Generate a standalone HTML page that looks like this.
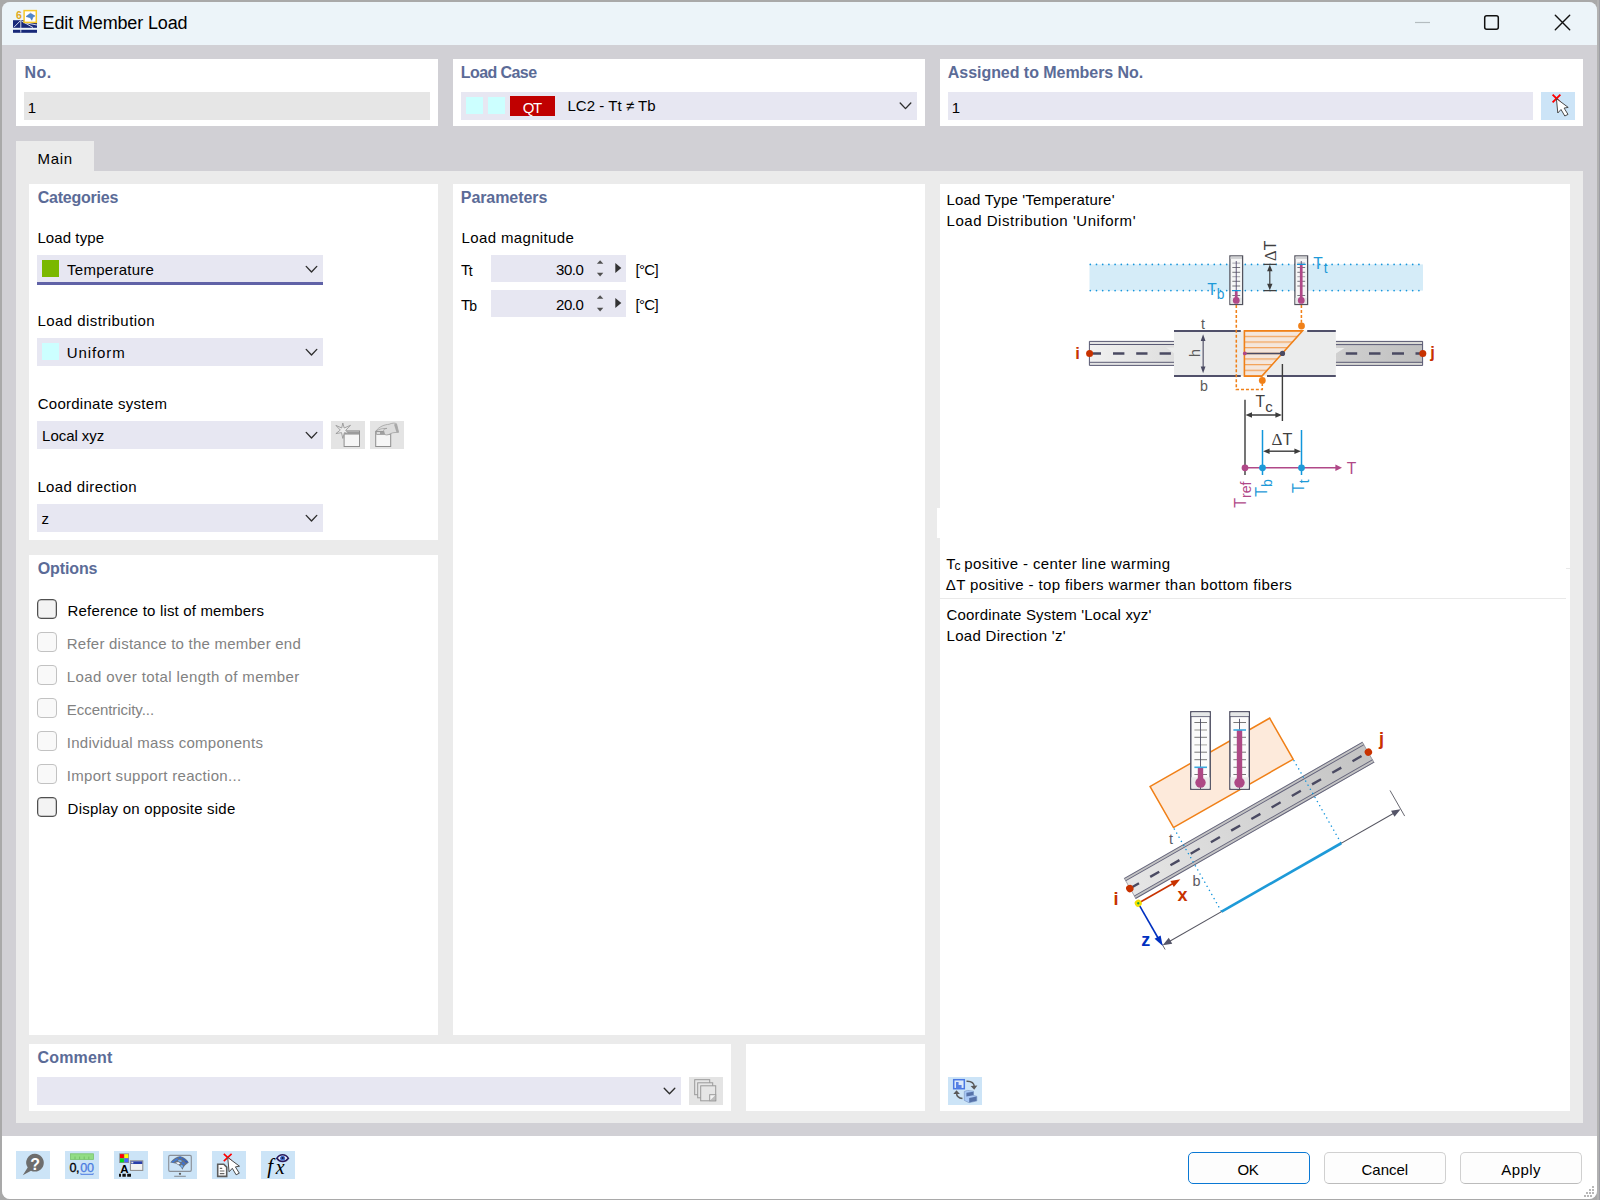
<!DOCTYPE html>
<html lang="en">
<head>
<meta charset="utf-8">
<title>Edit Member Load</title>
<style>
*{box-sizing:border-box;margin:0;padding:0}
html,body{width:1600px;height:1200px;overflow:hidden}
body{background:#a9a9a9;font-family:"Liberation Sans",sans-serif;font-size:15px;color:#000;position:relative}
.abs,.t,.w,.in,.ind,.btn,.gbtn,.cb,.cbd,.pb{position:absolute}
#win{left:2px;top:2px;width:1595px;height:1197px;background:#d1d0d5;border-radius:8px 8px 8px 8px;overflow:hidden}
#rstrip{left:1597px;top:0;width:3px;height:1200px;background:linear-gradient(90deg,#b2b2b2 0,#b2b2b2 60%,#9d9da3 60%)}
#title{left:0;top:0;width:1595px;height:43px;background:#ecf4f9}
#foot{left:0;top:1134px;width:1595px;height:63px;background:#fff}
#tabpanel{left:16px;top:171px;width:1567px;height:952px;background:#ebebeb}
#tab{left:16px;top:141px;width:78px;height:31px;background:#ebebeb}
.w{background:#fff}
.in{background:#e7e7f2}
.ind{background:#e6e6e6}
.btn{background:#cce4f7}
.gbtn{background:#e4e4e4}
.t{white-space:pre;line-height:1;}
.s{position:relative}
.cb{width:20px;height:20px;border:1px solid #505050;border-radius:4px;background:#f3f3f3;box-shadow:inset 0 0 0 .5px #9a9a9a}
.cbd{width:20px;height:20px;border:1px solid #c2c2c2;border-radius:4px;background:#f9f9f9}
.pb{height:32px;border:1px solid #d0d0d0;border-bottom-color:#bcbcbc;border-radius:5px;background:#fdfdfd}
svg{position:absolute;overflow:visible}
</style>
</head>
<body>
<div id="rstrip" class="abs"></div>
<div id="win" class="abs"><div id="title" class="abs"></div><div id="foot" class="abs"></div></div>

<!-- top row panels -->
<div class="w" style="left:16px;top:59px;width:422px;height:67px"></div>
<div class="ind" style="left:24px;top:92px;width:406px;height:28px"></div>
<div class="w" style="left:453px;top:59px;width:472px;height:67px"></div>
<div class="in" style="left:461px;top:92px;width:456px;height:28px"></div>
<div class="abs" style="left:466px;top:97px;width:17px;height:17px;background:#ccffff"></div>
<div class="abs" style="left:488px;top:97px;width:17px;height:17px;background:#ccffff"></div>
<div class="abs" style="left:510px;top:96px;width:45px;height:20px;background:#c00000"></div>
<div class="w" style="left:940px;top:59px;width:643px;height:67px"></div>
<div class="in" style="left:948px;top:92px;width:585px;height:28px"></div>
<div class="btn" style="left:1541px;top:92px;width:34px;height:28px"></div>

<!-- tab -->
<div id="tab" class="abs"></div>
<div id="tabpanel" class="abs"></div>

<!-- Categories -->
<div class="w" style="left:29px;top:184px;width:409px;height:356px"></div>
<div class="in" style="left:37px;top:255px;width:286px;height:28px"></div>
<div class="abs" style="left:37px;top:282px;width:286px;height:3px;background:#6062a7"></div>
<div class="abs" style="left:42px;top:260px;width:17px;height:17px;background:#7ab800"></div>
<div class="in" style="left:37px;top:338px;width:286px;height:28px"></div>
<div class="abs" style="left:42px;top:343px;width:17px;height:17px;background:#ccffff"></div>
<div class="in" style="left:37px;top:421px;width:286px;height:28px"></div>
<div class="gbtn" style="left:331px;top:421px;width:34px;height:28px"></div>
<div class="gbtn" style="left:370px;top:421px;width:34px;height:28px"></div>
<div class="in" style="left:37px;top:504px;width:286px;height:28px"></div>

<!-- Options -->
<div class="w" style="left:29px;top:555px;width:409px;height:480px"></div>
<div class="cb" style="left:37px;top:599px"></div>
<div class="cbd" style="left:37px;top:632px"></div>
<div class="cbd" style="left:37px;top:665px"></div>
<div class="cbd" style="left:37px;top:698px"></div>
<div class="cbd" style="left:37px;top:731px"></div>
<div class="cbd" style="left:37px;top:764px"></div>
<div class="cb" style="left:37px;top:797px"></div>

<!-- Parameters -->
<div class="w" style="left:453px;top:184px;width:472px;height:851px"></div>
<div class="in" style="left:491px;top:255px;width:135px;height:27px"></div>
<div class="in" style="left:491px;top:290px;width:135px;height:27px"></div>

<!-- Comment -->
<div class="w" style="left:29px;top:1044px;width:702px;height:67px"></div>
<div class="in" style="left:37px;top:1077px;width:644px;height:28px"></div>
<div class="gbtn" style="left:689px;top:1077px;width:34px;height:28px"></div>
<div class="w" style="left:746px;top:1044px;width:179px;height:67px"></div>

<!-- Right panel -->
<div class="w" style="left:940px;top:184px;width:630px;height:927px"></div>
<div class="abs" style="left:940px;top:598px;width:626px;height:1px;background:#e9e9e9"></div>
<div class="abs" style="left:1566px;top:568px;width:4px;height:1px;background:#e9e9e9"></div>
<div class="w" style="left:937px;top:508px;width:3px;height:30px"></div>
<div class="btn" style="left:948px;top:1077px;width:34px;height:28px"></div>

<!-- footer buttons -->
<div class="btn" style="left:16px;top:1151px;width:34px;height:28px"></div>
<div class="btn" style="left:65px;top:1151px;width:34px;height:28px"></div>
<div class="btn" style="left:114px;top:1151px;width:34px;height:28px"></div>
<div class="btn" style="left:163px;top:1151px;width:34px;height:28px"></div>
<div class="btn" style="left:212px;top:1151px;width:34px;height:28px"></div>
<div class="btn" style="left:261px;top:1151px;width:34px;height:28px"></div>
<div class="pb" style="left:1188px;top:1152px;width:122px;border:1.5px solid #0a78d4"></div>
<div class="pb" style="left:1324px;top:1152px;width:122px"></div>
<div class="pb" style="left:1460px;top:1152px;width:122px"></div>

<span class="t" style="left:42.60px;top:14px;font-size:18px;letter-spacing:-0.139px;">Edit Member Load</span>
<span class="t" style="left:24.40px;top:65px;font-size:16px;font-weight:700;color:#5b6b97;letter-spacing:0.559px;">No.</span>
<span class="t" style="left:27.80px;top:100px;">1</span>
<span class="t" style="left:460.80px;top:65px;font-size:16px;font-weight:700;color:#5b6b97;letter-spacing:-0.578px;">Load Case</span>
<span class="t" style="left:522.70px;top:100px;color:#fff;letter-spacing:-1.244px;">QT</span>
<span class="t" style="left:567.40px;top:98px;letter-spacing:0.048px;">LC2 - Tt ≠ Tb</span>
<span class="t" style="left:947.80px;top:65px;font-size:16px;font-weight:700;color:#5b6b97;letter-spacing:-0.045px;">Assigned to Members No.</span>
<span class="t" style="left:951.80px;top:100px;">1</span>
<span class="t" style="left:37.60px;top:151px;letter-spacing:0.661px;">Main</span>
<span class="t" style="left:37.70px;top:190px;font-size:16px;font-weight:700;color:#5b6b97;letter-spacing:-0.234px;">Categories</span>
<span class="t" style="left:37.40px;top:230px;letter-spacing:0.089px;">Load type</span>
<span class="t" style="left:67.10px;top:262px;letter-spacing:0.258px;">Temperature</span>
<span class="t" style="left:37.40px;top:313px;letter-spacing:0.451px;">Load distribution</span>
<span class="t" style="left:66.70px;top:345px;letter-spacing:0.914px;">Uniform</span>
<span class="t" style="left:37.70px;top:396px;letter-spacing:0.259px;">Coordinate system</span>
<span class="t" style="left:42.10px;top:428px;letter-spacing:-0.041px;">Local xyz</span>
<span class="t" style="left:37.40px;top:479px;letter-spacing:0.382px;">Load direction</span>
<span class="t" style="left:41.60px;top:511px;">z</span>
<span class="t" style="left:37.80px;top:561px;font-size:16px;font-weight:700;color:#5b6b97;letter-spacing:-0.123px;">Options</span>
<span class="t" style="left:67.60px;top:603px;letter-spacing:0.172px;">Reference to list of members</span>
<span class="t" style="left:66.80px;top:636px;color:#828282;letter-spacing:0.232px;">Refer distance to the member end</span>
<span class="t" style="left:66.80px;top:669px;color:#828282;letter-spacing:0.399px;">Load over total length of member</span>
<span class="t" style="left:66.80px;top:702px;color:#828282;letter-spacing:-0.056px;">Eccentricity...</span>
<span class="t" style="left:66.80px;top:735px;color:#828282;letter-spacing:0.273px;">Individual mass components</span>
<span class="t" style="left:66.80px;top:768px;color:#828282;letter-spacing:0.302px;">Import support reaction...</span>
<span class="t" style="left:67.60px;top:801px;letter-spacing:0.221px;">Display on opposite side</span>
<span class="t" style="left:460.80px;top:190px;font-size:16px;font-weight:700;color:#5b6b97;letter-spacing:-0.075px;">Parameters</span>
<span class="t" style="left:461.60px;top:230px;letter-spacing:0.354px;">Load magnitude</span>
<span class="t" style="left:460.9px;top:262px">T<span class="s" style="font-size:14px;top:1px;margin-left:-1.3px">t</span></span>
<span class="t" style="left:556.00px;top:262px;letter-spacing:-0.434px;">30.0</span>
<span class="t" style="left:635.60px;top:262px;letter-spacing:-0.724px;">[°C]</span>
<span class="t" style="left:460.9px;top:297px">T<span class="s" style="font-size:14px;top:1px;margin-left:-0.9px">b</span></span>
<span class="t" style="left:556.00px;top:297px;letter-spacing:-0.434px;">20.0</span>
<span class="t" style="left:635.60px;top:297px;letter-spacing:-0.724px;">[°C]</span>
<span class="t" style="left:37.60px;top:1050px;font-size:16px;font-weight:700;color:#5b6b97;letter-spacing:0.153px;">Comment</span>
<span class="t" style="left:1237.50px;top:1162px;letter-spacing:-0.488px;">OK</span>
<span class="t" style="left:1361.50px;top:1162px;">Cancel</span>
<span class="t" style="left:1501.30px;top:1162px;letter-spacing:0.417px;">Apply</span>
<span class="t" style="left:946.50px;top:192px;letter-spacing:0.187px;">Load Type &#x27;Temperature&#x27;</span>
<span class="t" style="left:946.50px;top:213px;letter-spacing:0.540px;">Load Distribution &#x27;Uniform&#x27;</span>
<span class="t" style="left:946.3px;top:556px">T<span class="s" style="font-size:12px;top:1px;margin-left:-0.9px">c</span><span style="letter-spacing:0.4px;margin-left:-0.8px"> positive - center line warming</span></span>
<span class="t" style="left:945.80px;top:577px;letter-spacing:0.380px;">ΔT positive - top fibers warmer than bottom fibers</span>
<span class="t" style="left:946.50px;top:607px;letter-spacing:0.172px;">Coordinate System &#x27;Local xyz&#x27;</span>
<span class="t" style="left:946.50px;top:628px;letter-spacing:0.293px;">Load Direction &#x27;z&#x27;</span>
<svg width="1600" height="1200" viewBox="0 0 1600 1200" style="left:0;top:0" font-family="'Liberation Sans',sans-serif">
<defs>
<path id="chev" d="M-5.3 -3L0 2.6L5.3 -3" fill="none" stroke="#2e2e2e" stroke-width="1.35" stroke-linecap="round" stroke-linejoin="round"/>
<g id="spin"><path d="M0 0l3.2 3.6h-6.4z" fill="#505050"/><path d="M0 16.2l3.2-3.6h-6.4z" fill="#505050"/><path d="M15.2 2.7l6 5.1l-6 5.1z" fill="#333"/></g>
<path id="cur" d="M0 0L1.4 14.4L4.6 10.9L8.4 17.4L11.6 15.8L7.7 9.5L11.8 8.8Z" fill="#fff" stroke="#4a4a4a" stroke-width="1" stroke-linejoin="round"/>
</defs>
<!-- chevrons -->
<use href="#chev" x="905.5" y="106"/>
<use href="#chev" x="311.5" y="269.4"/>
<use href="#chev" x="311.5" y="352.4"/>
<use href="#chev" x="311.5" y="435.4"/>
<use href="#chev" x="311.5" y="518.4"/>
<use href="#chev" x="669.5" y="1091.2"/>
<!-- spinners -->
<use href="#spin" x="600.1" y="260.2"/>
<use href="#spin" x="600.1" y="295.2"/>
<!-- window controls -->
<line x1="1415" x2="1430" y1="22.5" y2="22.5" stroke="#b4bcc0" stroke-width="1.2"/>
<rect x="1484.7" y="15.7" width="13.6" height="13.6" rx="2" fill="none" stroke="#111" stroke-width="1.5"/>
<path d="M1555.3 15.3L1569.7 29.7M1569.7 15.3L1555.3 29.7" stroke="#111" stroke-width="1.4" stroke-linecap="round"/>
<!-- resize grip -->
<g fill="#b8b8b8"><rect x="1592" y="1186" width="2" height="2"/><rect x="1589" y="1189" width="2" height="2"/><rect x="1592" y="1189" width="2" height="2"/><rect x="1586" y="1192" width="2" height="2"/><rect x="1589" y="1192" width="2" height="2"/><rect x="1592" y="1192" width="2" height="2"/><rect x="1584" y="1195" width="2" height="2"/><rect x="1587" y="1195" width="2" height="2"/><rect x="1590" y="1195" width="2" height="2"/></g>

<!-- app icon -->
<g>
<rect x="13" y="20.2" width="24" height="7.6" fill="#172878"/><rect x="13" y="29.8" width="24" height="3" fill="#172878"/>
<path d="M20.8 20.5V32.6M20.5 20.6L14 27.2M21.5 21L33 27.5M24 22.5L37 25" stroke="#e8ecf8" stroke-width=".9" fill="none"/>
<rect x="24.1" y="10.6" width="12.2" height="11.8" fill="#fff" stroke="#f6c828" stroke-width="1.5"/>
<path d="M26 16.5L30.5 13.2L35 16L33 17L31.8 20.3L30.3 17.8Z" fill="#4c86cc" stroke="#3c6ab0" stroke-width=".5"/>
<text x="15.9" y="18.7" font-size="10.5" font-weight="700" fill="#e0a820">6</text>
</g>

<!-- assigned pick button -->
<path d="M1552.6 94.6L1560.4 102.4M1560.4 94.6L1552.6 102.4" stroke="#ff0000" stroke-width="1.9"/>
<use href="#cur" x="1556.4" y="98.6"/>

<!-- coord system buttons (disabled look) -->
<g>
<rect x="344.1" y="430.9" width="15.4" height="15.6" fill="#f6f6f6" stroke="#8e8e8e" stroke-width="1"/>
<rect x="344.6" y="431.4" width="14.4" height="3.2" fill="#9c9c9c"/>
<path d="M342.8 423.0L344.2 428.0L350.5 425.3L345.7 430.3L348.6 433.4L344.4 432.7L342.8 438.4L341.5 432.6L335.9 433.6L340.3 430.1L335.9 425.4L341.7 428.0Z" fill="#ececec" stroke="#909090" stroke-width=".8" stroke-linejoin="round"/>
</g>
<g>
<rect x="375.7" y="431.4" width="15" height="15.1" fill="#f6f6f6" stroke="#8e8e8e" stroke-width="1"/>
<rect x="376.2" y="431.9" width="14" height="3" fill="#a0a0a0"/><rect x="377" y="432.3" width="3" height="1.4" fill="#f4f4f4"/>
<path d="M376 431C379 426.5 385 424.5 389 424.3C392 423 395 422.6 396.5 423.8L398.6 432.3L394 432.6C391 433 390.6 434 388.5 434.6C386.5 435.5 384.4 434.8 384.3 433.2L383.6 430.6C383.4 428.8 386 428.6 387 428.4C383 428.4 379 429 376 431Z" fill="#dcdcdc" stroke="#9a9a9a" stroke-width=".7"/>
<path d="M394 424.5L396.5 432.4L398.6 432.2L396.5 423.8Z" fill="#a8a8a8"/>
</g>

<!-- comment library button -->
<g fill="#e6e6e6" stroke="#9a9a9a" stroke-width="1">
<rect x="694.7" y="1079.7" width="15" height="15"/><rect x="697.7" y="1082.8" width="15" height="15"/><rect x="700.7" y="1085.8" width="15" height="15"/>
<rect x="709.7" y="1094.7" width="6" height="6" fill="#f4f4f4"/>
</g>
<path d="M715.2 1095.2V1100.2H710.2Z" fill="#bdbdbd"/>

<!-- view switch button -->
<g>
<rect x="953.7" y="1079.7" width="10.6" height="9" fill="#dbe9fa" stroke="#4a78e2" stroke-width="1.5"/>
<path d="M956 1088.5V1082H958.6V1085H961.6V1088.5Z" fill="#5580e4"/>
<path d="M966.5 1081.2C971 1081 974 1083 974.3 1086.5" fill="none" stroke="#5a5a5a" stroke-width="1.5"/>
<path d="M970.6 1086l3.6 3.7l3.2-4.2z" fill="#5a5a5a"/>
<path d="M962.5 1098.6C958.5 1098 956.6 1096 956.6 1093.2" fill="none" stroke="#5a5a5a" stroke-width="1.5"/>
<path d="M953.3 1094l3.2-3.7l3.4 3.7z" fill="#5a5a5a"/>
<path d="M964.3 1091.4L967.5 1090.4L973.5 1091.2L973.5 1095.5L976.8 1096.3V1101L969 1102.7L964.3 1100.4Z" fill="#a9c9f6" stroke="#6b86b4" stroke-width=".5"/>
<path d="M966.4 1092.8L973.4 1091.7V1095.3L966.4 1096.6Z" fill="#5672a8"/>
<path d="M969.2 1098L976.6 1096.6V1100.8L969.2 1102.4Z" fill="#5672a8"/>
</g>

<!-- footer icon 1: help -->
<g>
<path d="M34.9 1153.8a8.9 8.9 0 1 1 -3.9 16.9L22.8 1175.2L27.7 1167.6A8.9 8.9 0 0 1 34.9 1153.8Z" fill="#6d6d6d"/>
<text x="30.3" y="1169.8" font-size="16" font-weight="700" fill="#fff">?</text>
</g>
<!-- footer icon 2: decimals -->
<g>
<rect x="70.4" y="1153.8" width="23" height="5.6" fill="#92dd85" stroke="#78c46c" stroke-width=".8"/>
<path d="M75 1159.2v-2.6M79.6 1159.2v-2.6M84.2 1159.2v-2.6M88.8 1159.2v-2.6" stroke="#6cba60" stroke-width=".8"/>
<text x="69.4" y="1171.8" font-size="12.6" fill="#000" stroke="#000" stroke-width=".3" letter-spacing="-.4">0,<tspan x="80.3" fill="#4a7ae0" stroke="#4a7ae0" stroke-width=".25" letter-spacing="-.3">00</tspan></text>
<path d="M80.8 1173.3v1h12.4v-1" fill="none" stroke="#4a7ae0" stroke-width="1"/>
</g>
<!-- footer icon 3: colours / A / window -->
<g>
<rect x="119.2" y="1153.4" width="9.8" height="9.6" fill="#8a8a8a"/>
<rect x="120" y="1154.2" width="3.9" height="3.8" fill="#f00"/><rect x="124.4" y="1154.2" width="3.9" height="3.8" fill="#ff0"/>
<rect x="120" y="1158.5" width="3.9" height="3.8" fill="#0d2"/><rect x="124.4" y="1158.5" width="3.9" height="3.8" fill="#46f"/>
<rect x="130.4" y="1160.8" width="12.4" height="9.6" fill="#f2f2f2" stroke="#8a8a8a" stroke-width="1"/>
<rect x="130.9" y="1161.3" width="11.4" height="2.7" fill="#2a3ea8"/><rect x="131.3" y="1161.8" width="2" height="1.6" fill="#ddd"/>
<text x="120.2" y="1172.8" font-size="11.5" font-weight="700" fill="#000">A</text>
<path d="M119 1175.2h2M122.4 1175.2h3.4M127.2 1175.2h3.8" stroke="#111" stroke-width="3"/>
</g>
<!-- footer icon 4: monitor -->
<g>
<rect x="168.7" y="1155.4" width="22.6" height="16" rx="1.3" fill="none" stroke="#8a9098" stroke-width="1.15"/>
<circle cx="180" cy="1173.8" r="1.15" fill="#5a5a5a"/>
<line x1="174.2" x2="185.8" y1="1176.3" y2="1176.3" stroke="#8a9098" stroke-width="1.1"/>
<path d="M170.2 1162.4C173 1158.5 177 1156.6 180.1 1156.2C184 1156.8 187 1159.4 188.8 1162.4C186 1164 183.6 1166.6 182.4 1169.8C181 1166.6 178.4 1164.6 175.6 1163.6C173.8 1163 172 1162.6 170.2 1162.4Z" fill="#687280"/>
<g>
<ellipse cx="180.1" cy="1157.7" rx="1.7" ry=".9" fill="#2e6ad6"/>
<ellipse cx="176.2" cy="1159.6" rx="1.9" ry=".9" fill="#3c7ce2" transform="rotate(-18 176.2 1159.600)"/>
<ellipse cx="183.7" cy="1159.5" rx="1.8" ry=".9" fill="#2c62ca" transform="rotate(22 183.7 1159.500)"/>
<ellipse cx="173.4" cy="1161.5" rx="1.7" ry=".8" fill="#3c7ce2" transform="rotate(-25 173.4 1161.500)"/>
<ellipse cx="179.9" cy="1160.9" rx="1.9" ry="1" fill="#74b2f4" transform="rotate(15 179.9 1160.900)"/>
<ellipse cx="186.2" cy="1161.6" rx="1.6" ry=".9" fill="#2a5ac2" transform="rotate(32 186.2 1161.600)"/>
<ellipse cx="183.300" cy="1163.400" rx="1.7" ry="1.100" fill="#3a72da" transform="rotate(35 183.300 1163.400)"/>
<ellipse cx="181.700" cy="1166.300" rx="1.5" ry="1.200" fill="#72b0f2" transform="rotate(50 181.700 1166.300)"/>
<path d="M175.600 1162.700L178.200 1162L180.400 1163.600L178.600 1164.600Z" fill="#f4f6fa"/>
</g>
</g>
<!-- footer icon 5: doc + cursor -->
<g>
<path d="M217.7 1164.3H223.800L226.700 1167.200V1176.400H217.700Z" fill="#fff" stroke="#5c5c5c" stroke-width="1.6"/>
<path d="M219.800 1168.400h2.400M219.800 1171h4.600M219.800 1173.600h4.600" stroke="#666" stroke-width="1.1"/>
<path d="M223.800 1153.800L231.600 1161.200M231.600 1153.800L223.800 1161.200" stroke="#ff0000" stroke-width="1.6"/>
<use href="#cur" x="227.700" y="1157.400"/>
</g>
<!-- footer icon 6: fx eye -->
<g>
<text x="267.2" y="1172.6" font-family="'Liberation Serif',serif" font-style="italic" font-size="21" fill="#000">f<tspan x="275.8" y="1173.8" font-size="20">x</tspan></text>
<path d="M276.8 1158.3C279.7 1153.6 285.5 1153.6 288.4 1158.3C285.5 1162.6 279.7 1162.6 276.8 1158.3Z" fill="#eef2fb" stroke="#2a1a5c" stroke-width="1.6"/>
<circle cx="282.600" cy="1158.200" r="2.500" fill="#3a66c8"/><circle cx="282.600" cy="1158" r="1.100" fill="#14143a"/>
</g>
</svg>

<svg width="1600" height="1200" viewBox="0 0 1600 1200" style="left:0;top:0" font-family="'Liberation Sans',sans-serif">
<defs>
<linearGradient id="bmL" x1="0" x2="1" y1="0" y2="0"><stop offset="0" stop-color="#f1f1f1"/><stop offset="1" stop-color="#dedede"/></linearGradient>
<linearGradient id="bmR" x1="0" x2="1" y1="0" y2="0"><stop offset="0" stop-color="#d0d0d0"/><stop offset="1" stop-color="#bfbfbf"/></linearGradient>
<pattern id="hat" width="6" height="5.65" patternUnits="userSpaceOnUse" y="335.8"><rect width="6" height="5.65" fill="#f4e6dc"/><rect y="0" width="6" height="1.2" fill="#f3a157"/></pattern>
</defs>
<!-- blue band -->
<rect x="1089.5" y="264.4" width="333.5" height="26.2" fill="#d5ecf8"/>
<line x1="1090.3" x2="1423" y1="264.4" y2="264.4" stroke="#1696dc" stroke-width="1.7" stroke-linecap="round" stroke-dasharray="0.01 6.19"/>
<line x1="1090.3" x2="1423" y1="290.6" y2="290.6" stroke="#1696dc" stroke-width="1.7" stroke-linecap="round" stroke-dasharray="0.01 6.19"/>
<!-- left beam -->
<rect x="1089" y="341" width="85" height="24.8" fill="url(#bmL)"/>
<rect x="1089" y="341.8" width="85" height="2.4" fill="#e4e4e4"/><rect x="1089" y="362.6" width="85" height="2.4" fill="#e4e4e4"/>
<g stroke="#5a5a74" stroke-width="1" fill="none">
<path d="M1174 341.4H1089.4V365.4H1174"/><path d="M1089.4 344.5H1174M1089.4 362.3H1174"/>
</g>
<!-- right beam -->
<rect x="1335.8" y="341" width="87.2" height="24.8" fill="url(#bmR)"/>
<rect x="1335.8" y="342" width="87.2" height="2.2" fill="#dadad6"/><rect x="1335.8" y="362.8" width="87.2" height="2.2" fill="#dadad6"/>
<g stroke="#5a5a74" stroke-width="1" fill="none">
<path d="M1335.8 341.4H1422.6V365.4H1335.8"/><path d="M1335.8 344.6H1422.6M1335.8 362.3H1422.6"/>
</g>
<!-- section -->
<rect x="1174" y="330.8" width="161.8" height="45.3" fill="#ebecec"/>
<path d="M1166 347.5L1180 357.5H1174V347.5Z" fill="#ebecec"/>
<path d="M1330.5 357L1344.5 348H1335.8V357Z" fill="#ebecec"/>
<g stroke="#50506a" stroke-width="2" fill="none">
<path d="M1174 330.9H1240.8M1307.2 330.9H1335.8M1174 376H1240.8M1267 376H1335.8"/>
</g>
<!-- centre dashes -->
<g stroke="#4a4a62" stroke-width="2.5">
<path d="M1092.8 353.4H1101M1113 353.4H1124.4M1136.2 353.4H1147.5M1159.6 353.4H1170.9"/>
<path d="M1345.8 353.5H1357.2M1369 353.5H1380.5M1392 353.5H1404M1415.5 353.5H1423"/>
</g>
<circle cx="1089.6" cy="353.4" r="3.5" fill="#c83200"/>
<circle cx="1422.8" cy="353.5" r="3.5" fill="#c83200"/>
<text x="1075.3" y="359.1" font-size="16.5" font-weight="700" fill="#c83200">i</text>
<text x="1430.2" y="357.6" font-size="16.5" font-weight="700" fill="#c83200">j</text>
<!-- h dimension -->
<g fill="#4a4a62" stroke="none">
<rect x="1202.6" y="338" width="1.1" height="32"/>
<path d="M1203.1 334.3l2.4 6.6h-4.8z M1203.1 373.2l2.4-6.6h-4.8z"/>
</g>
<g fill="#5a5a5a" font-size="14.2">
<text x="1201" y="328.7">t</text>
<text x="1200.1" y="390.6">b</text>
<text transform="translate(1199.6 357) rotate(-90)" x="0" y="0">h</text>
</g>
<!-- orange trapezoid -->
<path d="M1244.4 330.9H1302.5L1261.9 376.1H1244.4Z" fill="url(#hat)" stroke="#f08018" stroke-width="1.6" stroke-linejoin="miter"/>
<line x1="1244.8" x2="1282.5" y1="353.4" y2="353.4" stroke="#4a4a62" stroke-width="1.5"/>
<circle cx="1244.8" cy="353.4" r="1.9" fill="#b04888"/>
<circle cx="1282.5" cy="353.4" r="2.6" fill="#4a4a62"/>
<!-- dashed orange -->
<g stroke="#f08018" stroke-width="1.55" fill="none" stroke-dasharray="3 1.95">
<path d="M1236.3 305V389.4H1262.3V384"/><path d="M1301.4 305V323"/>
</g>
<circle cx="1301.5" cy="326" r="3.4" fill="#f08018"/>
<circle cx="1262.3" cy="380.5" r="3.4" fill="#f08018"/>
<!-- thermometers -->
<g>
<rect x="1229.90" y="255.9" width="12.7" height="48.6" fill="#f6f6f6" stroke="#53535e" stroke-width="1.25"/>
<rect x="1230.50" y="256.5" width="11.5" height="2.4" fill="#cfd0d2"/>
<rect x="1230.50" y="297.8" width="11.5" height="6.1" fill="#e4e5e6"/>
<path d="M1232.35 267.5h7.8M1232.35 272.3h7.8M1232.35 281.3h7.8M1232.35 286h7.8M1232.35 295.5h7.8" stroke="#66666e" stroke-width=".9"/>
<path d="M1232.35 263.1h7.8M1232.35 276.7h7.8" stroke="#b4b4ba" stroke-width="1.2"/>
<line x1="1236.25" x2="1236.25" y1="261" y2="291.1" stroke="#54486e" stroke-width=".9"/>
<line x1="1236.25" x2="1236.25" y1="290.6" y2="300" stroke="#b04888" stroke-width="2.7"/>
<circle cx="1236.25" cy="300.4" r="3.4" fill="#b04888"/>
<line x1="1231.95" x2="1240.75" y1="290.6" y2="290.6" stroke="#1096dc" stroke-width="1.2"/>
</g>
<g>
<rect x="1294.90" y="255.9" width="12.7" height="48.6" fill="#f6f6f6" stroke="#53535e" stroke-width="1.25"/>
<rect x="1295.50" y="256.5" width="11.5" height="2.4" fill="#cfd0d2"/>
<rect x="1295.50" y="297.8" width="11.5" height="6.1" fill="#e4e5e6"/>
<path d="M1297.35 267.5h7.8M1297.35 272.3h7.8M1297.35 281.3h7.8M1297.35 286h7.8M1297.35 295.5h7.8" stroke="#66666e" stroke-width=".9"/>
<path d="M1297.35 263.1h7.8M1297.35 276.7h7.8" stroke="#b4b4ba" stroke-width="1.2"/>
<line x1="1301.25" x2="1301.25" y1="261" y2="264.9" stroke="#54486e" stroke-width=".9"/>
<line x1="1301.25" x2="1301.25" y1="264.4" y2="300" stroke="#b04888" stroke-width="2.7"/>
<circle cx="1301.25" cy="300.4" r="3.4" fill="#b04888"/>
<line x1="1296.95" x2="1305.75" y1="264.4" y2="264.4" stroke="#1096dc" stroke-width="1.2"/>
</g>
<!-- labels Tb Tt -->
<g fill="#1e9ad8" font-size="15.6">
<text x="1207.2" y="295.3">T<tspan x="1216.8" y="299" font-size="13.8">b</tspan></text>
<text x="1313.2" y="268.8">T<tspan x="1323.8" y="273" font-size="13.8">t</tspan></text>
</g>
<!-- vertical dT dimension -->
<g stroke="#404040" stroke-width="1.2" fill="none"><path d="M1263.5 264.4H1276.3M1263.5 290.6H1276.3M1269.8 268V287"/></g>
<path d="M1269.8 264.8l2.7 6.4h-5.4zM1269.8 290.2l2.7-6.4h-5.4z" fill="#3c3c3c"/>
<text transform="translate(1276 260.9) rotate(-90)" font-size="15.6" fill="#404040"><tspan font-family="'Liberation Serif',serif" font-size="16.6">Δ</tspan>T</text>
<!-- Tc dimension -->
<g stroke="#3c3c3c" stroke-width="1.4" fill="none"><path d="M1245 399.8V475M1282.4 364V421M1250 415H1277.5"/></g>
<path d="M1245.5 415l6.5-2.7v5.4zM1281.9 415l-6.5-2.7v5.4z" fill="#3c3c3c"/>
<g fill="#404040" font-size="15.6"><text x="1255.4" y="407.4">T<tspan x="1265.2" y="411.9" font-size="15">c</tspan></text>
</g>
<text x="1271.6" y="444.6" font-size="17" fill="#404040" font-family="'Liberation Serif',serif">Δ<tspan x="1282.6" font-size="16.2" font-family="'Liberation Sans',sans-serif">T</tspan></text>
<!-- blue lines -->
<g stroke="#1096dc" stroke-width="1.5"><path d="M1262.5 430V475M1301.5 430V475"/></g>
<g stroke="#3c3c3c" stroke-width="1.4" fill="none"><path d="M1267 451.2H1297"/></g>
<path d="M1263.1 451.2l6.5-2.7v5.4zM1300.9 451.2l-6.5-2.7v5.4z" fill="#3c3c3c"/>
<!-- axis -->
<line x1="1245" x2="1337" y1="467.8" y2="467.8" stroke="#b04888" stroke-width="1.4"/>
<path d="M1342 467.8l-6.6-3.3v6.6z" fill="#b04888"/>
<circle cx="1245" cy="467.8" r="3.4" fill="#b04888"/>
<circle cx="1262.5" cy="467.8" r="3.4" fill="#1e9ad8"/>
<circle cx="1301.5" cy="467.8" r="3.4" fill="#1e9ad8"/>
<text x="1346.8" y="473.5" font-size="15.6" fill="#b04888">T</text>
<g font-size="16">
<text transform="translate(1246.4 507.8) rotate(-90)" fill="#b04888">T<tspan dy="4.4" font-size="14">ref</tspan></text>
<text transform="translate(1267.4 496.8) rotate(-90)" fill="#1e9ad8">T<tspan dy="4.6" font-size="14">b</tspan></text>
<text transform="translate(1304.3 493) rotate(-90)" fill="#1e9ad8">T<tspan dy="4.2" font-size="14">t</tspan></text>
</g>
</svg>

<svg width="1600" height="1200" viewBox="0 0 1600 1200" style="left:0;top:0" font-family="'Liberation Sans',sans-serif">
<defs>
<linearGradient id="bm2" x1="0" x2="1" y1="0" y2="0"><stop offset="0" stop-color="#e6e6e6"/><stop offset="1" stop-color="#c3c3c3"/></linearGradient>
</defs>
<g transform="translate(1123.85 878.1) rotate(-29.75)">
<!-- orange area -->
<rect x="68.2" y="-66.5" width="137.8" height="47.3" fill="#fdeadb" stroke="#f08018" stroke-width="1.5"/>
<!-- beam -->
<rect x="0" y="0" width="274.8" height="24" fill="url(#bm2)"/>
<rect x="0" y="0.5" width="274.8" height="2.6" fill="#c4c4c4"/><rect x="0" y="20.9" width="274.8" height="2.6" fill="#c4c4c4"/>
<g stroke="#62627a" stroke-width=".9" fill="none"><path d="M0 .5H274.8M0 3.3H274.8M0 20.7H274.8M0 23.5H274.8"/></g>
<path d="M.3 0V24M274.5 0V24" stroke="#8a8a96" stroke-width=".6"/>
<line x1="3" x2="274" y1="12" y2="12" stroke="#4a4a62" stroke-width="2.4" stroke-dasharray="10.4 12.9" stroke-dashoffset="2.8"/>
<!-- dotted projection lines -->
<g stroke="#1696dc" stroke-width="1.5" stroke-linecap="round" stroke-dasharray="0.01 4.7"><path d="M68.2 -17.5V77M206 -17.5V77"/></g>
<!-- dimension line -->
<line x1="6" x2="268" y1="77.6" y2="77.6" stroke="#555560" stroke-width=".9"/>
<path d="M.4 77.6l9-3.5v7zM274.4 77.6l-9-3.5v7z" fill="#555568"/>
<path d="M.4 73.5V82.5M274.6 56V85.5" stroke="#555560" stroke-width=".8"/>
<line x1="68.2" x2="206" y1="77.6" y2="77.6" stroke="#1e9ad8" stroke-width="2.6"/>
<!-- axes -->
<line x1="0" x2="42" y1="29" y2="29" stroke="#c83200" stroke-width="1.6"/>
<path d="M48.5 29l-9.5-3.4v6.8z" fill="#c83200"/>
<line x1="0" x2="0" y1="29" y2="71" stroke="#0030c0" stroke-width="1.6"/>
<path d="M0 78l-3.5-10h7z" fill="#0030c0"/>
<circle cx="0" cy="29" r="3.5" fill="#f4e000"/><circle cx="0" cy="29" r="1.2" fill="#18a040"/>
<circle cx="0" cy="12" r="3.7" fill="#c83200"/>
<circle cx="274.8" cy="12" r="3.7" fill="#c83200"/>
</g>
<!-- thermometers -->
<g>
<rect x="1190.8" y="711.8" width="19.4" height="77.4" fill="#fbfbfb" stroke="#4a4a5e" stroke-width="1.4"/>
<rect x="1191.4" y="712.4" width="18.2" height="4" fill="#e6e8e8"/><line x1="1190.8" x2="1210.2" y1="716.6" y2="716.6" stroke="#4a4a62" stroke-width=".8"/>
<rect x="1191.4" y="777.3" width="18.2" height="11.4" fill="#ebebeb"/>
<path d="M1194.4 722.5h12.6M1194.4 737.3h12.6M1194.4 752.2h12.6M1194.4 759.7h12.6M1194.4 774.5h12.6" stroke="#6a6a6a" stroke-width=".9"/>
<path d="M1194.4 730h12.6M1194.4 744.8h12.6" stroke="#b8b8b4" stroke-width="1.3"/>
<line x1="1200.5" x2="1200.5" y1="718.8" y2="789" stroke="#4a4a62" stroke-width=".9"/>
<line x1="1200.5" x2="1200.5" y1="767.3" y2="782" stroke="#ad4885" stroke-width="5.4"/>
<circle cx="1200.5" cy="782.6" r="5.2" fill="#ad4885"/>
<line x1="1194.4" x2="1207" y1="767.3" y2="767.3" stroke="#3aa8e0" stroke-width="1.6"/>
</g>
<g>
<rect x="1229.9" y="711.8" width="19.4" height="77.4" fill="#fbfbfb" stroke="#4a4a5e" stroke-width="1.4"/>
<rect x="1230.5" y="712.4" width="18.2" height="4" fill="#e6e8e8"/><line x1="1229.9" x2="1249.3" y1="716.6" y2="716.6" stroke="#4a4a62" stroke-width=".8"/>
<rect x="1230.5" y="777.3" width="18.2" height="11.4" fill="#ebebeb"/>
<path d="M1233.4 722.5h12.6M1233.4 737.3h12.6M1233.4 752.2h12.6M1233.4 759.7h12.6M1233.4 767.3h12.6M1233.4 774.5h12.6" stroke="#6a6a6a" stroke-width=".9"/>
<path d="M1233.4 744.8h12.6" stroke="#b8b8b4" stroke-width="1.3"/>
<line x1="1239.5" x2="1239.5" y1="718.8" y2="789" stroke="#4a4a62" stroke-width=".9"/>
<line x1="1239.5" x2="1239.5" y1="730" y2="782" stroke="#ad4885" stroke-width="5.4"/>
<circle cx="1239.5" cy="782.6" r="5.2" fill="#ad4885"/>
<line x1="1233.4" x2="1246" y1="730" y2="730" stroke="#3aa8e0" stroke-width="1.6"/>
</g>
<g fill="#5a5a62" font-size="14.4"><text x="1169" y="843.5">t</text><text x="1192.6" y="885.6">b</text></g>
<g font-weight="700" font-size="18">
<text x="1113.6" y="904.5" fill="#c83200">i</text>
<text x="1379" y="744.5" fill="#c83200">j</text>
<text x="1177.6" y="901" fill="#c83200">x</text>
<text x="1141.2" y="945.7" fill="#0030c0">z</text>
</g>
</svg>

</body>
</html>
